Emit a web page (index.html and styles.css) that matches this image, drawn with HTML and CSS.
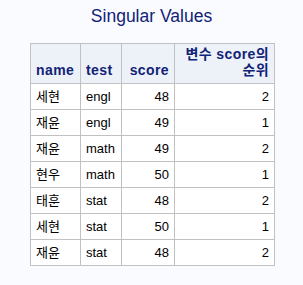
FILE: index.html
```html
<!DOCTYPE html>
<html>
<head>
<meta charset="utf-8">
<link rel="stylesheet" href="styles.css">
</head>
<body>
<div class="title">Singular Values</div>
<table class="grid">
  <colgroup>
    <col class="c-name">
    <col class="c-test">
    <col class="c-score">
    <col class="c-rank">
  </colgroup>
  <thead>
    <tr>
      <th class="left">name</th>
      <th class="left">test</th>
      <th class="right">score</th>
      <th class="right">변수 score의<br>순위</th>
    </tr>
  </thead>
  <tbody>
    <tr><td>세현</td><td>engl</td><td class="right">48</td><td class="right">2</td></tr>
    <tr><td>재윤</td><td>engl</td><td class="right">49</td><td class="right">1</td></tr>
    <tr><td>재윤</td><td>math</td><td class="right">49</td><td class="right">2</td></tr>
    <tr><td>현우</td><td>math</td><td class="right">50</td><td class="right">1</td></tr>
    <tr><td>태훈</td><td>stat</td><td class="right">48</td><td class="right">2</td></tr>
    <tr><td>세현</td><td>stat</td><td class="right">50</td><td class="right">1</td></tr>
    <tr><td>재윤</td><td>stat</td><td class="right">48</td><td class="right">2</td></tr>
  </tbody>
</table>
</body>
</html>
```
FILE: styles.css
```css
html, body {
  margin: 0;
  padding: 0;
  background: #fafbfe;
}
body {
  width: 303px;
  height: 285px;
  font-family: "Liberation Sans", Arial, "Noto Sans CJK KR", sans-serif;
}
.title {
  color: #112277;
  font-size: 17.5px;
  line-height: 20px;
  text-align: center;
  padding-top: 6px;
  height: 20px;
}
.grid {
  border-collapse: collapse;
  margin-top: 17px;
  margin-left: 30px;
  table-layout: fixed;
  width: 245px;
}
.c-name { width: 50px; }
.c-test { width: 41px; }
.c-score { width: 53px; }
.c-rank { width: 100px; }
.grid th, .grid td {
  border: 1px solid #c1c1c1;
  padding: 0 5px;
}
.grid th {
  background: #edf2f9;
  color: #112277;
  font-weight: bold;
  font-size: 14px;
  letter-spacing: 0.4px;
  line-height: 16px;
  height: 40px;
  vertical-align: bottom;
  padding-bottom: 5px;
  box-sizing: border-box;
}
.grid td {
  background: #ffffff;
  color: #000000;
  font-size: 13px;
  height: 25px;
  line-height: 16px;
  vertical-align: middle;
}
.left { text-align: left; }
.right { text-align: right; }
```
